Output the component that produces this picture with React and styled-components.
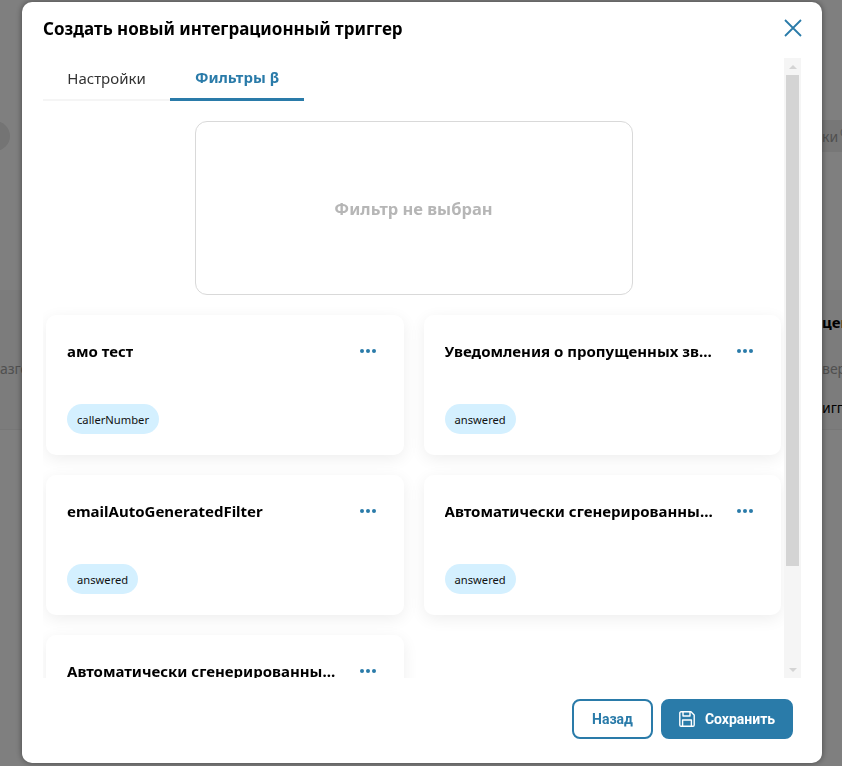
import React from "react";
import styled, { createGlobalStyle } from "styled-components";

const Global = createGlobalStyle`
  * { box-sizing: border-box; }
  html, body { margin: 0; padding: 0; height: 100%; }
  body { font-family: "Noto Sans", "Open Sans", sans-serif; background: #fff; overflow: hidden; }
`;

const Page = styled.div`
  height: 766px;
  padding-top: 120px;
  overflow: hidden;
`;

const PageToolbar = styled.div`
  height: 32px;
  display: flex;
  justify-content: space-between;
  align-items: center;
`;

const PageAvatar = styled.div`
  width: 30px;
  height: 30px;
  margin-left: -20px;
  border-radius: 50%;
  background: #e8e8e8;
`;

const PageTab = styled.div`
  width: 42px;
  height: 32px;
  padding-left: 22px;
  background: #efefef;
  color: #a0a0a0;
  font-size: 14px;
  line-height: 34px;
  white-space: nowrap;
  overflow: hidden;

  sup {
    font-size: 9px;
    line-height: 0;
    margin-left: 2px;
  }
`;

const PageCards = styled.div`
  margin-top: 138px;
  height: 140px;
  display: flex;
  justify-content: space-between;
  background: #f8f8f8;
  border-bottom: 1px solid #efefef;
`;

const PageCard = styled.div`
  width: ${(p) => p.$width}px;
  padding-top: 22px;
  display: flex;
  flex-direction: column;
  overflow: hidden;
  white-space: nowrap;
`;

const PageCardLine = styled.span`
  height: 20px;
  margin-top: ${(p) => p.$top || 0}px;
  line-height: 20px;
  color: ${(p) => p.$color};
  font-weight: ${(p) => (p.$bold ? 700 : 400)};
  font-size: ${(p) => (p.$bold ? 15 : 14)}px;
`;

const Overlay = styled.div`
  position: fixed;
  inset: 0;
  background: rgba(0, 0, 0, 0.5);
  padding: 2px 20px 3px 22px;
`;

const Modal = styled.div`
  width: 800px;
  height: 761px;
  background: #fff;
  border-radius: 10px;
  box-shadow: 0 0 6px rgba(0, 0, 0, 0.45);
  display: flex;
  flex-direction: column;
`;

const Header = styled.div`
  height: 56px;
  flex: none;
  padding: 0 20px 4px 21px;
  display: flex;
  justify-content: space-between;
  align-items: center;
`;

const Title = styled.h2`
  margin: 0;
  font-size: 17px;
  font-weight: 700;
  color: #000;
`;

const CloseButton = styled.button`
  width: 18px;
  height: 18px;
  padding: 0;
  border: 0;
  background: none;
  color: #2a7ba9;
  display: flex;
`;

const Body = styled.div`
  flex: 1;
  min-height: 0;
  margin: 0 21px;
  display: flex;
`;

const ScrollContent = styled.div`
  flex: 1;
  min-width: 0;
  overflow: hidden;
`;

const Scrollbar = styled.div`
  width: 17px;
  flex: none;
  background: #f5f5f5;
  display: flex;
  flex-direction: column;
  align-items: center;
`;

const ScrollArrow = styled.div`
  height: 17px;
  flex: none;
  display: flex;
  align-items: center;
  justify-content: center;

  &::before {
    content: "";
    border-left: 4px solid transparent;
    border-right: 4px solid transparent;
    border-${(p) => (p.$down ? "top" : "bottom")}: 4px solid #d4d4d4;
  }
`;

const ScrollThumb = styled.div`
  width: 13px;
  height: 491px;
  flex: none;
  background: #d4d4d4;
`;

const ScrollGap = styled.div`
  flex: 1;
`;

const Tabs = styled.div`
  width: 261px;
  height: 43px;
  display: flex;
`;

const Tab = styled.button`
  padding: 0 0 2px;
  height: 43px;
  border: 0;
  background: none;
  font-family: inherit;
  font-size: 15px;
  font-weight: ${(p) => (p.$active ? 700 : 400)};
  color: ${(p) => (p.$active ? "#2a7ba9" : "#333")};
  border-bottom: ${(p) => (p.$active ? "3px solid #2a7ba9" : "2px solid #f5f5f5")};
  width: ${(p) => p.$width}px;
  white-space: nowrap;
  flex: none;
`;

const Preview = styled.div`
  width: 438px;
  height: 174px;
  margin: 20px auto 0;
  border: 1px solid #d9d9d9;
  border-radius: 12px;
  display: flex;
  align-items: center;
  justify-content: center;
  color: #b6b6b6;
  font-size: 16.5px;
  font-weight: 700;
`;

const FilterGrid = styled.div`
  margin-top: 20px;
  padding: 0 3px 20px;
  display: grid;
  grid-template-columns: 1fr 1fr;
  gap: 20px;
`;

const FilterCard = styled.div`
  height: 140px;
  min-width: 0;
  padding: 24px 28px 21px 21px;
  background: #fff;
  border-radius: 10px;
  box-shadow: 0 4px 16px rgba(0, 0, 0, 0.07);
  display: flex;
  flex-direction: column;
  justify-content: space-between;
  align-items: flex-start;
`;

const CardHead = styled.div`
  width: 100%;
  display: flex;
  align-items: center;
  justify-content: space-between;
  gap: 17px;
`;

const CardTitle = styled.div`
  min-width: 0;
  font-size: 15px;
  line-height: 24px;
  font-weight: 700;
  color: #000;
  white-space: nowrap;
  overflow: hidden;
  text-overflow: ellipsis;
`;

const MoreIcon = styled.svg`
  width: 16px;
  height: 4px;
  flex: none;
  margin-bottom: 1px;
  fill: #2a7ba9;
`;

const Chip = styled.span`
  height: 30px;
  padding: 0 10px;
  border-radius: 15px;
  background: #d4f0ff;
  color: #111;
  font-size: 11.2px;
  line-height: 32px;
`;

const Footer = styled.div`
  height: 85px;
  flex: none;
  padding: 21px 29px 0 0;
  display: flex;
  justify-content: flex-end;
  gap: 8px;
  font-family: Roboto, sans-serif;
`;

const Button = styled.button`
  height: 40px;
  border-radius: 8px;
  border: 2px solid #2a7ba9;
  background: ${(p) => (p.$primary ? "#2a7ba9" : "#fff")};
  color: ${(p) => (p.$primary ? "#fff" : "#2a7ba9")};
  font-family: inherit;
  font-size: 14px;
  font-weight: 700;
  width: ${(p) => p.$width}px;
  padding: 0;
  display: flex;
  align-items: center;
  justify-content: center;
  gap: 10px;
`;

const filters = [
  { title: "амо тест", chip: "callerNumber" },
  { title: "Уведомления о пропущенных звонках", chip: "answered" },
  { title: "emailAutoGeneratedFilter", chip: "answered" },
  { title: "Автоматически сгенерированный фильтр", chip: "answered" },
  { title: "Автоматически сгенерированный фильтр", chip: "answered" },
];

const SaveIcon = () => (
  <svg width="16" height="16" viewBox="0 0 16 16" fill="none" stroke="currentColor" strokeWidth="1.4" strokeLinejoin="round">
    <path d="M2 .8 H12 L15.2 4 V14 A1.2 1.2 0 0 1 14 15.2 H2 A1.2 1.2 0 0 1 .8 14 V2 A1.2 1.2 0 0 1 2 .8 Z" />
    <path d="M4 1 V5 H11 V1" />
    <path d="M3.6 15 V9 H12.4 V15" />
  </svg>
);

const App = () => (
  <>
    <Global />
    <Page>
      <PageToolbar>
        <PageAvatar />
        <PageTab>
          ки<sup>0</sup>
        </PageTab>
      </PageToolbar>
      <PageCards>
        <PageCard $width={60}>
          <PageCardLine />
          <PageCardLine $top={27} $color="#a0a0a0">
            азговор
          </PageCardLine>
        </PageCard>
        <PageCard $width={20}>
          <PageCardLine $color="#000" $bold>
            ценарий
          </PageCardLine>
          <PageCardLine $top={27} $color="#a0a0a0">
            вер
          </PageCardLine>
          <PageCardLine $top={19} $color="#000">
            игге
          </PageCardLine>
        </PageCard>
      </PageCards>
    </Page>
    <Overlay>
      <Modal>
        <Header>
          <Title>Создать новый интеграционный триггер</Title>
          <CloseButton aria-label="Закрыть">
            <svg width="18" height="18" viewBox="0 0 18 18" fill="none" stroke="currentColor" strokeWidth="1.8">
              <path d="M1 1 L17 17 M17 1 L1 17" />
            </svg>
          </CloseButton>
        </Header>
        <Body>
          <ScrollContent>
            <Tabs>
              <Tab $width={127}>Настройки</Tab>
              <Tab $width={134} $active>
                Фильтры β
              </Tab>
            </Tabs>
            <Preview>Фильтр не выбран</Preview>
            <FilterGrid>
              {filters.map((f, i) => (
                <FilterCard key={i}>
                  <CardHead>
                    <CardTitle>{f.title}</CardTitle>
                    <MoreIcon viewBox="0 0 16 4">
                      <circle cx="2" cy="2" r="2" />
                      <circle cx="8" cy="2" r="2" />
                      <circle cx="14" cy="2" r="2" />
                    </MoreIcon>
                  </CardHead>
                  <Chip>{f.chip}</Chip>
                </FilterCard>
              ))}
            </FilterGrid>
          </ScrollContent>
          <Scrollbar>
            <ScrollArrow />
            <ScrollThumb />
            <ScrollGap />
            <ScrollArrow $down />
          </Scrollbar>
        </Body>
        <Footer>
          <Button $width={81}>Назад</Button>
          <Button $width={132} $primary>
            <SaveIcon />
            Сохранить
          </Button>
        </Footer>
      </Modal>
    </Overlay>
  </>
);

export default App;
